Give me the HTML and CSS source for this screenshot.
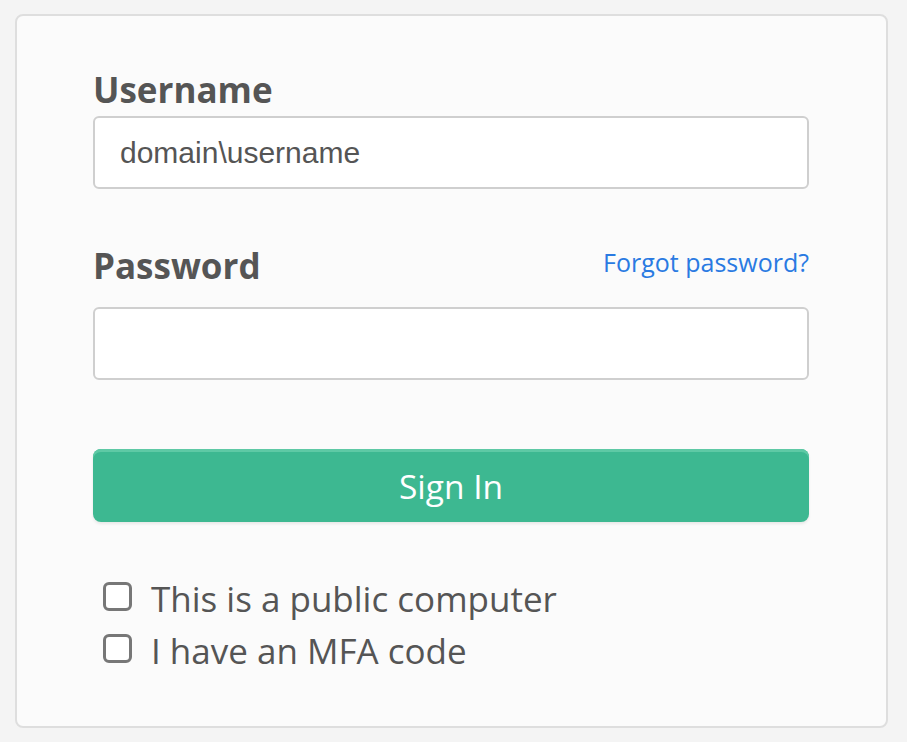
FILE: index.html
```html
<!DOCTYPE html>
<html lang="en">
<head>
<meta charset="utf-8">
<title>Sign In</title>
<link rel="stylesheet" href="styles.css">
</head>
<body>
<div class="card">
  <form class="form">
    <div class="field">
      <div class="label-row"><label class="label" for="u">Username</label></div>
      <input id="u" class="input" type="text" placeholder="domain\username">
    </div>
    <div class="field field-pw">
      <div class="label-row label-row-pw">
        <label class="label" for="p">Password</label>
        <a class="link" href="#">Forgot password?</a>
      </div>
      <input id="p" class="input" type="password">
    </div>
    <button class="btn" type="button">Sign In</button>
    <div class="checks">
      <label class="check"><span class="box"></span><span>This is a public computer</span></label>
      <label class="check"><span class="box"></span><span>I have an MFA code</span></label>
    </div>
  </form>
</div>
</body>
</html>
```
FILE: styles.css
```css
html, body { margin: 0; padding: 0; }
body {
  background: #f4f4f4;
  font-family: "Open Sans", "Liberation Sans", sans-serif;
  color: #555;
  padding: 14px 19px 0 15px;
}
.card {
  background: #fbfbfb;
  border: 2px solid #dedede;
  border-radius: 8px;
  height: 714px;
  box-sizing: border-box;
  padding: 54px 77px 0 76px;
}
.form { display: flex; flex-direction: column; }
.label-row {
  display: flex;
  justify-content: space-between;
  align-items: flex-start;
  margin-bottom: 6px;
}
.label-row-pw { margin-bottom: 21px; }
.label {
  font-weight: 700;
  font-size: 35px;
  line-height: 40px;
  color: #555;
}
.link {
  font-size: 25px;
  line-height: 30px;
  margin-top: 1px;
  color: #2a7ae2;
  text-decoration: none;
}
.input {
  display: block;
  box-sizing: border-box;
  width: 100%;
  height: 73px;
  margin: 0;
  border: 2px solid #cfcfcf;
  border-radius: 6px;
  background: #fff;
  padding: 0 25px;
  font-family: "Liberation Sans", Arial, sans-serif;
  font-size: 30px;
  color: #555;
  outline: none;
}
.input::placeholder { color: #555; opacity: 1; }
.field-pw { margin-top: 57px; }
.btn {
  margin-top: 69px;
  height: 73px;
  border: none;
  border-radius: 8px;
  background: #3db891;
  box-shadow: inset 0 3px 0 #5ec9a5, 0 2px 3px rgba(0,0,0,0.08);
  color: #fff;
  font-family: "Open Sans", sans-serif;
  font-size: 33.5px;
  padding: 0;
}
.checks {
  margin-top: 51px;
  padding-left: 10px;
  display: flex;
  flex-direction: column;
}
.check {
  display: flex;
  align-items: flex-start;
  gap: 19px;
  font-size: 35px;
  line-height: 52px;
  color: #555;
}
.box {
  box-sizing: border-box;
  width: 29px;
  height: 29px;
  border: 3px solid #777;
  border-radius: 6px;
  background: #fff;
  flex: none;
  margin-top: 9px;
}
```
